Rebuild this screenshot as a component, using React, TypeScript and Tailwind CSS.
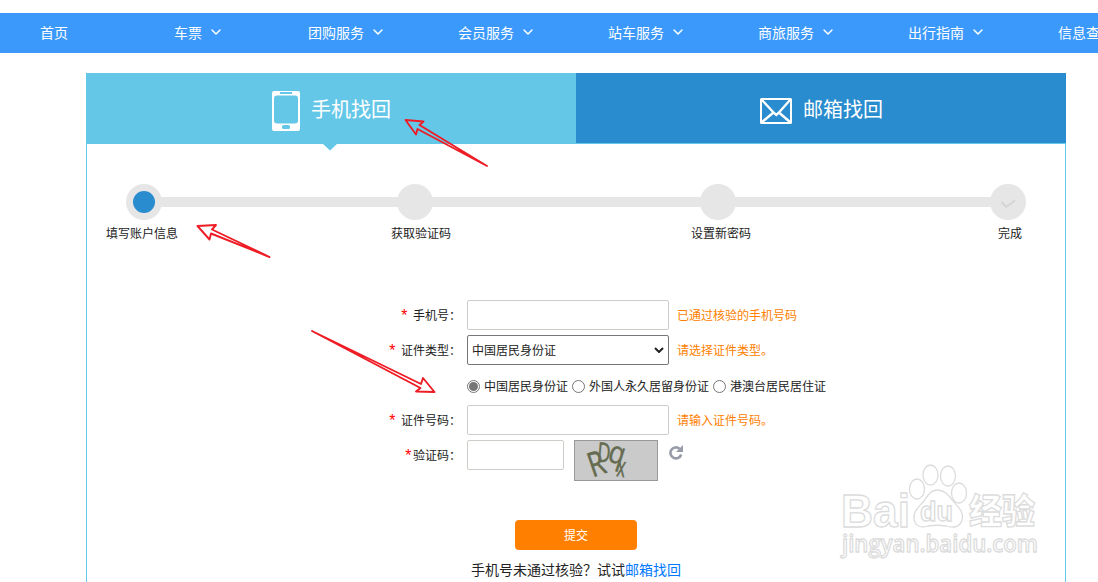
import { ChevronDown } from "lucide-react";

const navItems = [
    { label: "首页", width: "w-[134px]", hasMenu: false },
    { label: "车票", width: "w-[134px]", hasMenu: true },
    { label: "团购服务", width: "w-[150px]", hasMenu: true },
    { label: "会员服务", width: "w-[150px]", hasMenu: true },
    { label: "站车服务", width: "w-[150px]", hasMenu: true },
    { label: "商旅服务", width: "w-[150px]", hasMenu: true },
    { label: "出行指南", width: "w-[150px]", hasMenu: true },
    { label: "信息查询", width: "w-[150px]", hasMenu: true },
];

const idTypes = ["中国居民身份证", "外国人永久居留身份证", "港澳台居民居住证"];

const NavBar = () => {
    return (
        <nav className="flex h-10 items-center overflow-hidden bg-[#3b99fc] pl-10 text-sm text-white">
            {navItems.map((item) => (
                <a key={item.label} className={`flex shrink-0 items-center whitespace-nowrap ${item.width}`}>
                    {item.label}
                    {item.hasMenu && <ChevronDown size={16} strokeWidth={2.2} className="-mt-0.5 ml-1.5" />}
                </a>
            ))}
        </nav>
    );
};

const PhoneIcon = () => (
    <svg width="28" height="40" viewBox="0 0 28 40">
        <rect width="28" height="40" rx="2" fill="#fff" />
        <rect x="8" y="1" width="12" height="2" fill="#64c7e8" />
        <rect x="2" y="4.5" width="24" height="28" rx="3" fill="#64c7e8" />
        <rect x="10" y="34" width="8" height="4" rx="1.5" fill="#64c7e8" />
    </svg>
);

const MailIcon = () => (
    <svg width="32" height="26" viewBox="0 0 32 26" fill="none" stroke="#fff" strokeWidth="2">
        <rect x="1" y="1" width="30" height="24" rx="0.5" />
        <path d="M1.500 1.500L14 15L16.300 17L18.500 15L30.500 1.500M1.500 24.500L13.500 14.500M30.500 24.500L19 14.500" strokeWidth="2.4" />
    </svg>
);

const Tabs = () => {
    return (
        <div className="flex h-[71px] border-b border-[#64c7e8] text-xl text-white">
            <div className="relative flex h-[71px] w-[490px] bg-[#64c7e8] pl-[186px]">
                <div className="mt-[18px]"><PhoneIcon /></div>
                <span className="ml-[11px] mt-[22px] leading-[30px]">手机找回</span>
                <svg className="absolute left-[236px] top-[70px]" width="16" height="8" viewBox="0 0 16 8">
                    <path d="M0 0H16L8 7.500Z" fill="#64c7e8" />
                </svg>
            </div>
            <div className="flex w-[490px] bg-[#298cce] pl-[184px]">
                <div className="mt-[25px]"><MailIcon /></div>
                <span className="ml-[11px] mt-[22px] leading-[30px]">邮箱找回</span>
            </div>
        </div>
    );
};

const Steps = () => {
    return (
        <div>
            <div className="flex items-center pl-[39px]">
                <div className="flex size-9 items-center justify-center rounded-full bg-[#e6e6e6]">
                    <div className="size-[22px] rounded-full bg-[#298cce]" />
                </div>
                <div className="-mx-1 h-2.5 w-[243px] bg-[#e6e6e6]" />
                <div className="size-9 rounded-full bg-[#e6e6e6]" />
                <div className="-mx-1 h-2.5 w-[275px] bg-[#e6e6e6]" />
                <div className="size-9 rounded-full bg-[#e6e6e6]" />
                <div className="-mx-1 h-2.5 w-[262px] bg-[#e6e6e6]" />
                <div className="flex size-9 items-center justify-center rounded-full bg-[#e6e6e6]">
                    <svg width="16" height="10" viewBox="0 0 16 10" className="mt-1" fill="none" stroke="#d4d4d4" strokeWidth="2">
                        <path d="M1.500 3L6 8L15 1.500" />
                    </svg>
                </div>
            </div>
            <div className="mt-[5px] flex pl-[19px] leading-[18px]">
                <span className="w-[285px]">填写账户信息</span>
                <span className="w-[300px]">获取验证码</span>
                <span className="w-[307px]">设置新密码</span>
                <span>完成</span>
            </div>
        </div>
    );
};

const Label = ({ text, tight = false }: { text: string; tight?: boolean }) => (
    <div className="flex w-[374px] shrink-0 items-center justify-end">
        <span className={`mt-1 font-['Liberation_Mono'] text-base leading-4 text-[#ff0000] ${tight ? "" : "mr-1"}`}>*</span>
        <span className="mt-0.5">{text}</span>
    </div>
);

const Hint = ({ text }: { text: string }) => <span className="ml-2 mt-0.5 text-[#ff8000]">{text}</span>;

const Captcha = () => (
    <svg width="84" height="41" viewBox="0 0 84 41" className="ml-2.5" fill="#656b50" fontFamily="Open Sans, sans-serif">
        <rect x="0.5" y="0.5" width="83" height="40" fill="#cacaca" stroke="#999" />
        <g stroke="#656b50" strokeWidth="0.500">
            <text transform="translate(18.500 37.500) rotate(-19) scale(.78 1)" fontSize="34">R</text>
            <text transform="translate(22.500 21.500) rotate(5) scale(.68 1)" fontSize="27">D</text>
            <text transform="translate(32.500 20.500) rotate(18) scale(.85 1)" fontSize="31">q</text>
            <text transform="translate(42 36) rotate(8) scale(.58 1)" fontSize="28">x</text>
        </g>
    </svg>
);

const RefreshIcon = () => (
    <svg width="14" height="15" viewBox="0 0 14 15" className="ml-[11px] mt-[5px]">
        <path d="M12.200 9.500A5.500 5.500 0 1 1 10.500 3.700" fill="none" stroke="#989ba8" strokeWidth="2.600" />
        <path d="M14 0V7H7Z" fill="#989ba8" />
    </svg>
);

const RecoverForm = () => {
    return (
        <div className="mt-[57px] flex flex-col gap-[5px]">
            <div className="flex h-[30px] items-center">
                <Label text="手机号：" />
                <input className="ml-1.5 h-[30px] w-[202px] rounded-[2px] border border-[#cfcdc7]" />
                <Hint text="已通过核验的手机号码" />
            </div>
            <div className="flex h-[30px] items-center">
                <Label text="证件类型：" />
                <div className="ml-1.5 flex h-[30px] w-[202px] items-center justify-between rounded-[2px] border border-[#767676] pl-1 pr-1">
                    <span className="mt-px">中国居民身份证</span>
                    <svg width="10" height="6" viewBox="0 0 10 6" fill="none" stroke="#222" strokeWidth="2">
                        <path d="M1 1L5 5L9 1" />
                    </svg>
                </div>
                <Hint text="请选择证件类型。" />
            </div>
            <div className="flex h-[30px] items-center pl-[380px] pt-0.5">
                {idTypes.map((type, index) => (
                    <label key={type} className="mr-1 flex items-center whitespace-nowrap">
                        <span className="mr-1 flex size-[13px] items-center justify-center rounded-full border border-[#767676]">
                            {index === 0 && <span className="size-[9px] rounded-full bg-[#767676]" />}
                        </span>
                        <span className="mt-px">{type}</span>
                    </label>
                ))}
            </div>
            <div className="flex h-[30px] items-center">
                <Label text="证件号码：" />
                <input className="ml-1.5 h-[30px] w-[202px] rounded-[2px] border border-[#cfcdc7]" />
                <Hint text="请输入证件号码。" />
            </div>
            <div className="flex h-[41px] items-start">
                <div className="flex h-[30px] items-center">
                    <Label text="验证码：" tight />
                    <input className="ml-1.5 h-[30px] w-[97px] rounded-[2px] border border-[#cfcdc7]" />
                </div>
                <Captcha />
                <RefreshIcon />
            </div>
            <div className="mt-[34px] pl-[428px]">
                <button type="button" className="block h-[30px] w-[122px] rounded-[4px] bg-[#ff8000] pt-0.5 text-white">提交</button>
            </div>
            <p className="mt-[5px] pl-96 text-sm leading-5">
                手机号未通过核验？试试<a className="text-[#0077ff]">邮箱找回</a>
            </p>
        </div>
    );
};

const Arrows = () => (
    <svg className="pointer-events-none absolute left-0 top-0" width="1098" height="582" fill="none" stroke="#ee1c25" strokeWidth="1.900" strokeLinejoin="round">
        <path d="M405.500 120L423.500 121.500L419.500 125L487 166L417.500 129L416 134.500Z" />
        <path d="M197.500 226L216 225L212 229.500L269.500 257L211 233.500L209.500 239.500Z" />
        <path d="M434.500 392L423 378L421 384L312 331L420.500 388L416 391.500Z" />
    </svg>
);

// Faint site logo in the lower right corner
const Watermark = () => (
    <svg className="pointer-events-none absolute left-[836px] top-[458px]" width="210" height="105" fill="#fff" stroke="#dcdcdc" strokeWidth="1.300">
        <g fontFamily="Liberation Sans, sans-serif" fontWeight="700">
            <text x="5" y="69" fontSize="47" textLength="69" lengthAdjust="spacingAndGlyphs">Bai</text>
            <ellipse cx="81" cy="31" rx="7.500" ry="10" />
            <ellipse cx="94.500" cy="17" rx="7.500" ry="10" />
            <ellipse cx="112" cy="18" rx="7.500" ry="10" />
            <ellipse cx="123" cy="35" rx="7.500" ry="10" />
            <path d="M101 32C109 32 113 38 117 43C122 49 128 53 126 62C124 70 116 70 110 68C104 67 98 67 92 68C86 70 79 69 78 61C77 53 83 49 87 44C91 39 94 32 101 32Z" />
            <text x="84" y="63" fontSize="27" textLength="33" lengthAdjust="spacingAndGlyphs">du</text>
        </g>
        <text x="133" y="66" fontSize="35" fontWeight="900" fontFamily="Noto Sans CJK SC, sans-serif" textLength="66" lengthAdjust="spacingAndGlyphs">经验</text>
        <text x="6" y="94" fontSize="23" fontWeight="600" fontFamily="Open Sans, sans-serif" textLength="196" lengthAdjust="spacingAndGlyphs">jingyan.baidu.com</text>
    </svg>
);

const App = () => {
    return (
        <div className="relative h-[582px] w-[1098px] overflow-hidden bg-white pt-[13px] font-['Liberation_Sans','Noto_Sans_CJK_SC',sans-serif] text-xs text-[#222]">
            <NavBar />
            <main className="ml-[86px] mt-5 w-[980px]">
                <Tabs />
                <div className="h-[438px] border-x border-[#64c7e8] pt-10">
                    <Steps />
                    <RecoverForm />
                </div>
            </main>
            <Watermark />
            <Arrows />
        </div>
    );
};

export default App;
